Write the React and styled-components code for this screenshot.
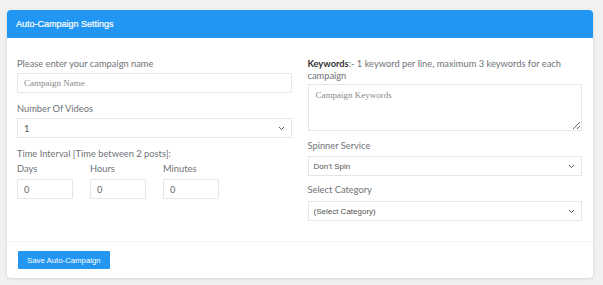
import React from "react";
import styled, { createGlobalStyle } from "styled-components";

const GlobalStyle = createGlobalStyle`
  html, body {
    margin: 0;
    padding: 0;
    background: #f0f1f3;
  }
  body {
    font-family: Lato, "Open Sans", sans-serif;
    color: #6c757d;
  }
`;

const Page = styled.div`
  padding: 10px 10px 7px 7px;
`;

const Card = styled.div`
  background: #fff;
  border-radius: 4px;
  box-shadow: 0 1px 3px rgba(0, 0, 0, 0.12);
  overflow: hidden;
`;

const Header = styled.div`
  background: #2196f3;
  height: 28px;
  display: flex;
  align-items: center;
  padding: 0 9px;
  color: #fff;
  font-family: "Liberation Sans", Arial, sans-serif;
  font-size: 9px;
  -webkit-text-stroke: 0.2px #fff;
`;

const Body = styled.div`
  display: grid;
  grid-template-columns: 1fr 1fr;
  column-gap: 16px;
  padding: 20px 11px 20px 10px;
  border-bottom: 1px solid #f3f3f3;
  align-items: start;
`;

const Column = styled.div`
  display: flex;
  flex-direction: column;
`;

const Label = styled.label`
  display: block;
  font-size: 9.3px;
  line-height: 12px;
  color: #707376;
  margin-bottom: ${(p) => p.$mb ?? 3}px;
`;

const Strong = styled.b`
  color: #333;
  font-weight: 700;
`;

const Field = styled.div`
  margin-bottom: ${(p) => p.$mb || 0}px;
`;

const TextInput = styled.input`
  box-sizing: border-box;
  display: block;
  width: 100%;
  height: 20px;
  border: 1px solid #e6e6e6;
  border-radius: 1px;
  padding: 0 6px;
  font-family: ${(p) => (p.$serif ? '"Liberation Serif", serif' : "Lato, sans-serif")};
  font-size: ${(p) => (p.$serif ? 9 : 9.3)}px;
  color: #666;
  outline: none;
  &::placeholder {
    color: #8a8a8a;
  }
`;

const TextArea = styled.textarea`
  box-sizing: border-box;
  display: block;
  width: 100%;
  height: 47px;
  border: 1px solid #e6e6e6;
  padding: 5px 7px;
  font-family: "Liberation Serif", serif;
  font-size: 9px;
  resize: vertical;
  outline: none;
  &::placeholder {
    color: #8a8a8a;
  }
`;

const SelectBox = styled.div`
  box-sizing: border-box;
  height: 20px;
  border: 1px solid #e6e6e6;
  display: flex;
  align-items: center;
  justify-content: space-between;
  padding: 0 6px 0 ${(p) => (p.$arial ? 5 : 6)}px;
  font-family: ${(p) => (p.$arial ? '"Liberation Sans", Arial, sans-serif' : "Lato, sans-serif")};
  font-size: ${(p) => (p.$arial ? 8 : 9.3)}px;
  color: #555;
`;

const Chevron = () => (
  <svg width="7" height="5" viewBox="0 0 7 5">
    <path d="M1 1l2.5 2.5L6 1" fill="none" stroke="#555" strokeWidth="1" />
  </svg>
);

const TimeRow = styled.div`
  display: flex;
  gap: 17px;
`;

const TimeCell = styled.div`
  width: 56px;
`;

const Footer = styled.div`
  padding: 9px 11px 9px 11px;
`;

const Button = styled.button`
  display: block;
  background: #2196f3;
  color: #fff;
  border: none;
  border-radius: 1px;
  height: 18px;
  padding: 0 9px;
  font-family: "Liberation Sans", Arial, sans-serif;
  font-size: 7.8px;
`;

export default function App() {
  return (
    <Page>
      <GlobalStyle />
      <Card>
        <Header>Auto-Campaign Settings</Header>
        <Body>
          <Column>
            <Label>Please enter your campaign name</Label>
            <Field $mb={10}>
              <TextInput $serif placeholder="Campaign Name" />
            </Field>
            <Label>Number Of Videos</Label>
            <Field $mb={10}>
              <SelectBox>
                1 <Chevron />
              </SelectBox>
            </Field>
            <Label>Time Interval [Time between 2 posts]:</Label>
            <TimeRow>
              {["Days", "Hours", "Minutes"].map((t) => (
                <TimeCell key={t}>
                  <Label $mb={4}>{t}</Label>
                  <TextInput defaultValue="0" />
                </TimeCell>
              ))}
            </TimeRow>
          </Column>
          <Column>
            <Label $mb={2}>
              <Strong>Keywords</Strong>:- 1 keyword per line, maximum 3 keywords for each campaign
            </Label>
            <Field $mb={9}>
              <TextArea placeholder="Campaign Keywords" />
            </Field>
            <Label $mb={4}>Spinner Service</Label>
            <Field $mb={8}>
              <SelectBox $arial>
                Don't Spin <Chevron />
              </SelectBox>
            </Field>
            <Label $mb={5}>Select Category</Label>
            <SelectBox $arial>
              (Select Category) <Chevron />
            </SelectBox>
          </Column>
        </Body>
        <Footer>
          <Button>Save Auto-Campaign</Button>
        </Footer>
      </Card>
    </Page>
  );
}
